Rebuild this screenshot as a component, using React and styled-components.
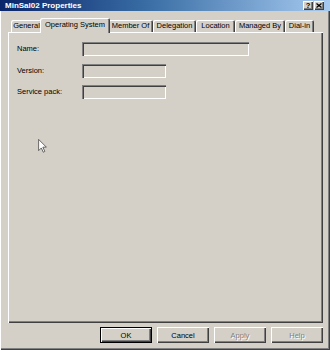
import React from "react";
import styled, { createGlobalStyle } from "styled-components";

const Global = createGlobalStyle`
  html, body { margin: 0; padding: 0; background: #d4d0c8; }
  body { font-family: "Liberation Sans", Arial, sans-serif; }
  * { box-sizing: border-box; }
`;

const Window = styled.div`
  position: relative;
  width: 330px;
  height: 350px;
  background: #d4d0c8;
  display: flex;
  flex-direction: column;
  box-shadow: inset 1px 0 0 #ffffff, inset -1px -1px 0 #404040, inset -2px -2px 0 #808080;
  font-size: 7.5px;
  color: #000;
  overflow: hidden;
`;

const TitleBar = styled.div`
  height: 11px;
  display: flex;
  align-items: center;
  padding: 0 6px 0 5px;
  background: linear-gradient(to right, #0a246a 0%, #3a6ea5 45%, #a6caf0 100%);
`;

const Title = styled.div`
  flex: 1;
  color: #ffffff;
  font-weight: bold;
  font-size: 8px;
  line-height: 11px;
  white-space: nowrap;
`;

const CaptionButton = styled.div`
  width: 10px;
  height: 9px;
  margin-left: ${(p) => (p.$gap ? "1px" : "0")};
  background: #d4d0c8;
  box-shadow: inset 1px 1px 0 #ffffff, inset -1px -1px 0 #404040, inset -2px -2px 0 #808080;
  display: flex;
  align-items: center;
  justify-content: center;
  font-weight: bold;
  font-size: 7.5px;
  line-height: 9px;
  color: #000;
`;

const TabStrip = styled.div`
  margin-top: 7px;
  height: 14px;
  display: flex;
  align-items: flex-end;
  padding-left: 11px;
`;

const Tab = styled.div`
  position: relative;
  z-index: ${(p) => (p.$active ? 2 : 1)};
  width: ${(p) => p.$w + (p.$active ? 4 : 0)}px;
  height: ${(p) => (p.$active ? 15 : 12)}px;
  margin: ${(p) => (p.$active ? "0 -2px -1px -2px" : "0")};
  background: #d4d0c8;
  border-radius: 2px 2px 0 0;
  box-shadow: inset 1px 1px 0 #ffffff, inset -1px 0 0 #404040, inset -2px 0 0 #808080;
  display: flex;
  align-items: ${(p) => (p.$active ? "flex-start" : "center")};
  padding-top: ${(p) => (p.$active ? "2px" : "0")};
  justify-content: center;
  white-space: nowrap;
  line-height: 10px;
`;

const Panel = styled.div`
  flex: 1;
  margin: 0 7px 0 8px;
  background: #d4d0c8;
  box-shadow: inset 1px 1px 0 #ffffff, inset -1px -1px 0 #404040, inset -2px -2px 0 #808080;
  padding: 10px 8px 0 9px;
`;

const FieldGrid = styled.div`
  display: grid;
  grid-template-columns: 65px auto;
  row-gap: 7.5px;
  align-items: center;
  justify-items: start;
`;

const Label = styled.div`
  white-space: nowrap;
  line-height: 14px;
`;

const Field = styled.div`
  width: ${(p) => p.$w}px;
  height: 14px;
  background: #d4d0c8;
  box-shadow: inset 1px 1px 0 #808080, inset 2px 2px 0 #404040, inset -1px -1px 0 #ffffff, inset -2px -2px 0 #d4d0c8;
`;

const ButtonRow = styled.div`
  display: flex;
  justify-content: flex-end;
  gap: 5px;
  padding: 4px 7px 7px 0;
`;

const Button = styled.div`
  width: 52px;
  height: 16px;
  display: flex;
  align-items: center;
  justify-content: center;
  background: #d4d0c8;
  box-shadow: ${(p) =>
    p.$default
      ? "inset 0 0 0 1px #000, inset 2px 2px 0 #ffffff, inset -2px -2px 0 #404040, inset -3px -3px 0 #808080"
      : "inset 1px 1px 0 #ffffff, inset -1px -1px 0 #404040, inset -2px -2px 0 #808080"};
  color: ${(p) => (p.$disabled ? "#808080" : "#000")};
  text-shadow: ${(p) => (p.$disabled ? "1px 1px 0 #ffffff" : "none")};
  font-size: 7.5px;
`;

const Cursor = styled.svg`
  position: absolute;
  left: 38px;
  top: 139px;
`;

const tabs = [
  { label: "General", w: 31 },
  { label: "Operating System", w: 66, active: true },
  { label: "Member Of", w: 45 },
  { label: "Delegation", w: 43 },
  { label: "Location", w: 39 },
  { label: "Managed By", w: 50 },
  { label: "Dial-in", w: 29 },
];

const fields = [
  { label: "Name:", w: 167 },
  { label: "Version:", w: 84 },
  { label: "Service pack:", w: 84 },
];

export default function App() {
  return (
    <>
      <Global />
      <Window>
        <TitleBar>
          <Title>MinSal02 Properties</Title>
          <CaptionButton>?</CaptionButton>
          <CaptionButton $gap>
            <svg width="6" height="5" viewBox="0 0 6 5">
              <path d="M0.5 0.5 L5.5 4.5 M5.5 0.5 L0.5 4.5" stroke="#000" strokeWidth="1.3" />
            </svg>
          </CaptionButton>
        </TitleBar>
        <TabStrip>
          {tabs.map((t) => (
            <Tab key={t.label} $w={t.w} $active={t.active}>
              {t.label}
            </Tab>
          ))}
        </TabStrip>
        <Panel>
          <FieldGrid>
            {fields.map((f) => (
              <React.Fragment key={f.label}>
                <Label>{f.label}</Label>
                <Field $w={f.w} />
              </React.Fragment>
            ))}
          </FieldGrid>
        </Panel>
        <ButtonRow>
          <Button $default>OK</Button>
          <Button>Cancel</Button>
          <Button $disabled>Apply</Button>
          <Button $disabled>Help</Button>
        </ButtonRow>
        <Cursor width="9" height="14" viewBox="0 0 11 18">
          <path d="M0.5 0.5 L0.5 15 L4 11.5 L6.5 17 L8.5 16 L6 10.5 L10.5 10.5 Z" fill="#ffffff" stroke="#444" strokeWidth="1" />
        </Cursor>
      </Window>
    </>
  );
}
